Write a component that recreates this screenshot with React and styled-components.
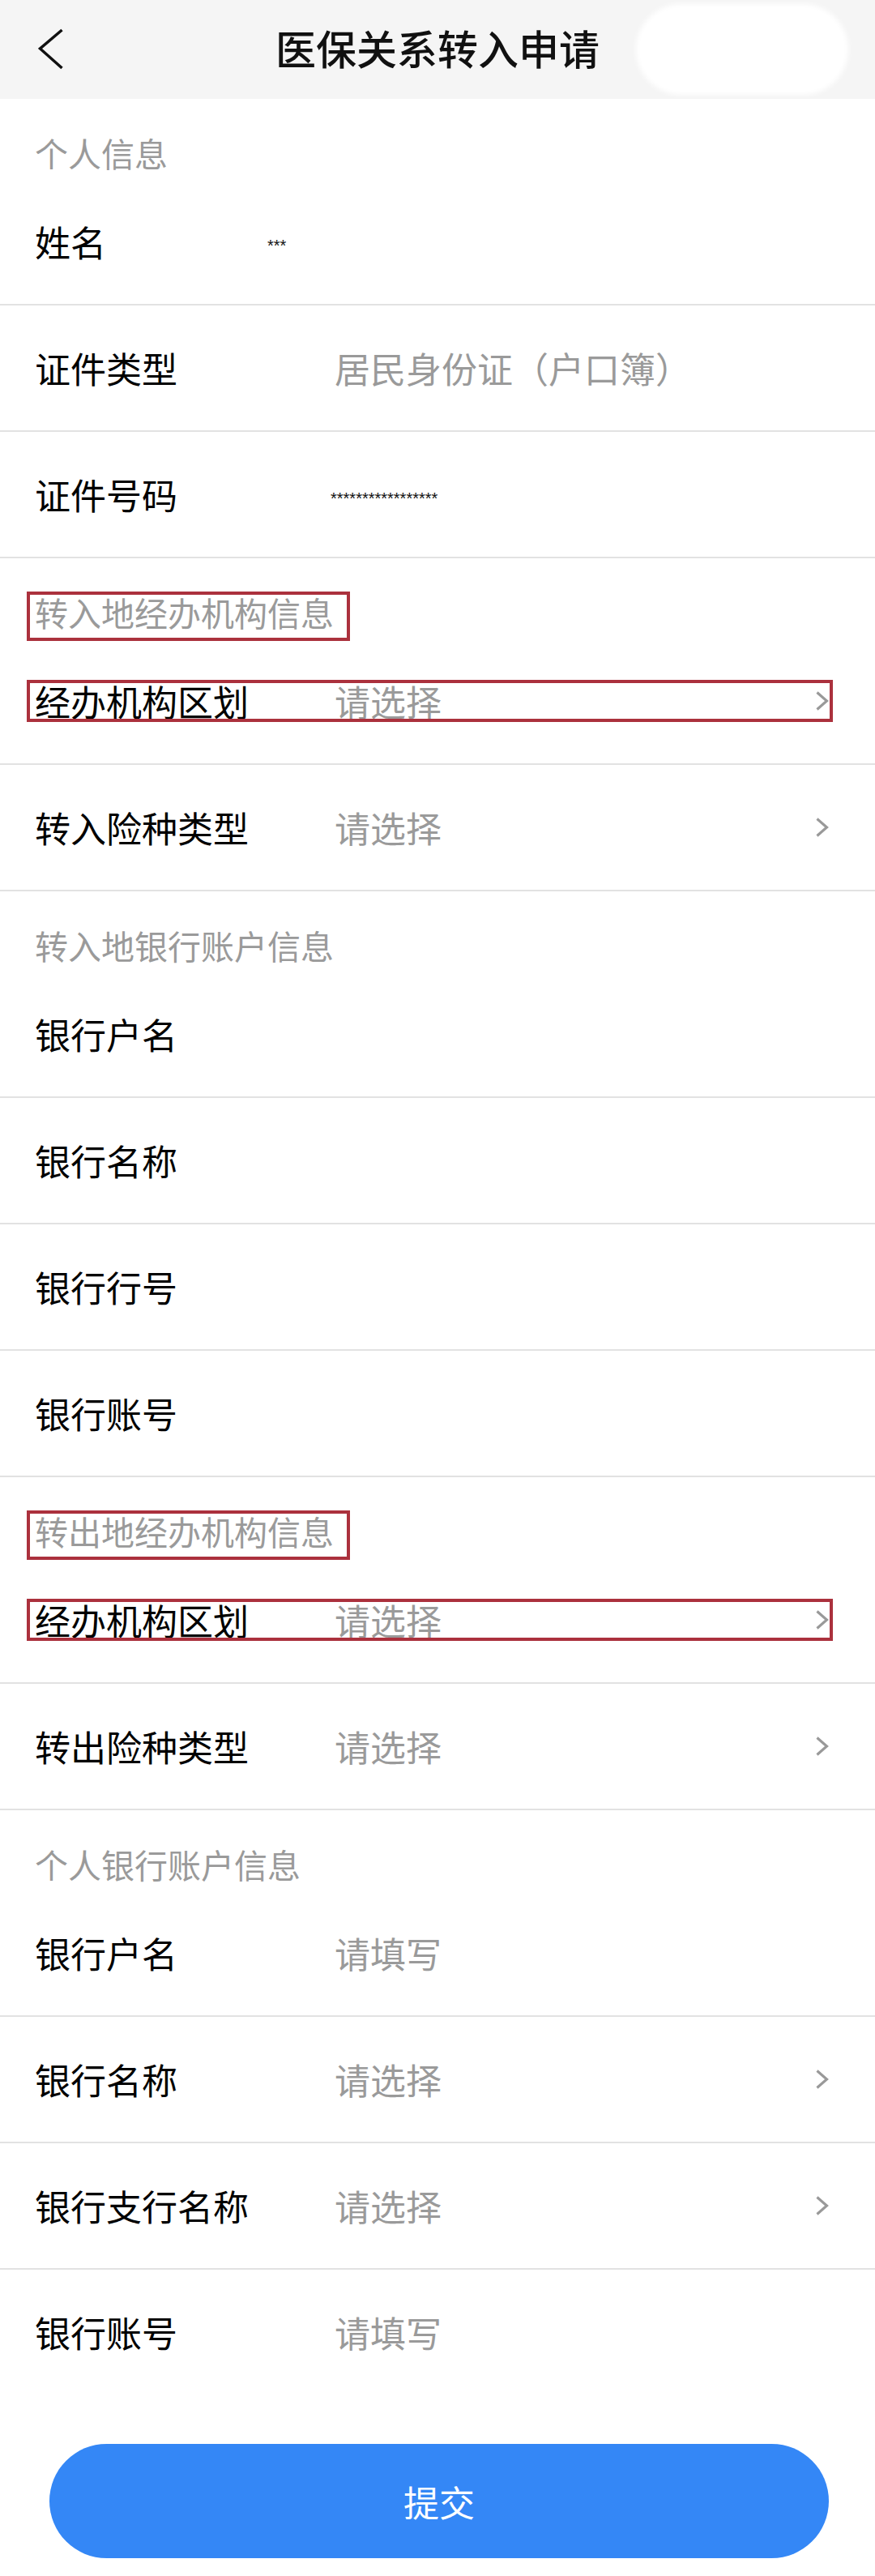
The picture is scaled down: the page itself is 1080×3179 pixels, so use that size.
import React from 'react';
import styled, { createGlobalStyle, css } from 'styled-components';

const GlobalStyle = createGlobalStyle`
    html, body {
        margin: 0;
        padding: 0;
        background: #ffffff;
    }
    body {
        font-family: "Noto Sans CJK SC", "Noto Sans", sans-serif;
        color: #111;
    }
`;

const Page = styled.div`
    width: 1080px;
    background: #fff;
    padding-bottom: 22px;
`;

const Header = styled.header`
    height: 122px;
    background: #f5f5f5;
    display: grid;
    grid-template-columns: 1fr auto 1fr;
    align-items: center;
`;

const BackButton = styled.div`
    justify-self: start;
    padding-left: 47px;
    display: flex;
    align-items: center;
`;

const Title = styled.h1`
    margin: 0 0 6px;
    font-size: 50px;
    line-height: 1;
    font-weight: 500;
    color: #111;
    letter-spacing: 0;
`;

/* 右上角被涂白的区域 */
const Blob = styled.div`
    justify-self: end;
    margin-right: 33px;
    width: 262px;
    height: 112px;
    border-radius: 56px;
    background: #fff;
    filter: blur(3px);
`;

const SectionHead = styled.div`
    height: 99px;
    box-sizing: border-box;
    padding: 46px 43px 12px;
`;

const markBox = css`
    position: relative;
    &::after {
        content: '';
        position: absolute;
        border: 4px solid #ab313d;
        pointer-events: none;
    }
`;

const SectionTitle = styled.span`
    display: inline-block;
    font-size: 41px;
    line-height: 41px;
    color: #9a9a9a;
    ${p => p.$marked && css`
        ${markBox}
        &::after { top: -5px; bottom: -15px; left: -10px; right: -20px; }
    `}
`;

const Row = styled.div`
    height: 154px;
    display: flex;
    align-items: center;
    padding: 0 57px 0 43px;
    border-bottom: ${p => (p.$last ? 'none' : '2px solid #e2e2e2')};
`;

const RowInner = styled.div`
    flex: 1;
    height: 44px;
    display: flex;
    align-items: center;
    ${p => p.$marked && css`
        ${markBox}
        &::after { top: -4px; bottom: -4px; left: -10px; right: -5px; }
    `}
`;

const Label = styled.span`
    width: 370px;
    flex-shrink: 0;
    font-size: 44px;
    line-height: 44px;
    color: #000;
`;

const Value = styled.span`
    flex: 1;
    font-size: 44px;
    line-height: 44px;
    color: #9a9a9a;
    white-space: nowrap;
`;

const Masked = styled.span`
    flex: 1;
    font-family: "Liberation Sans", Arial, sans-serif;
    font-size: 20px;
    line-height: 20px;
    margin-top: 10px;
    margin-left: ${p => p.$offset || 0}px;
    color: #111;
`;

const Arrow = styled.svg`
    flex-shrink: 0;
    width: 17px;
    height: 24px;
`;

const SubmitButton = styled.button`
    display: block;
    width: 962px;
    height: 141px;
    margin: 61px 0 0 61px;
    border: none;
    border-radius: 71px;
    background: #3487f6;
    color: #fff;
    font-family: "Noto Sans CJK SC", sans-serif;
    font-size: 44px;
    line-height: 1;
`;

const sections = [
    {
        title: '个人信息',
        rows: [
            { label: '姓名', masked: '***', offset: -83 },
            { label: '证件类型', value: '居民身份证（户口簿）' },
            { label: '证件号码', masked: '*****************', offset: -5 },
        ],
    },
    {
        title: '转入地经办机构信息',
        marked: true,
        rows: [
            { label: '经办机构区划', value: '请选择', arrow: true, marked: true },
            { label: '转入险种类型', value: '请选择', arrow: true },
        ],
    },
    {
        title: '转入地银行账户信息',
        rows: [
            { label: '银行户名' },
            { label: '银行名称' },
            { label: '银行行号' },
            { label: '银行账号' },
        ],
    },
    {
        title: '转出地经办机构信息',
        marked: true,
        rows: [
            { label: '经办机构区划', value: '请选择', arrow: true, marked: true },
            { label: '转出险种类型', value: '请选择', arrow: true },
        ],
    },
    {
        title: '个人银行账户信息',
        rows: [
            { label: '银行户名', value: '请填写' },
            { label: '银行名称', value: '请选择', arrow: true },
            { label: '银行支行名称', value: '请选择', arrow: true },
            { label: '银行账号', value: '请填写', last: true },
        ],
    },
];

const ChevronRight = () => (
    <Arrow viewBox="0 0 17 24">
        <polyline points="2.5,1.5 14.5,12 2.5,22.5" fill="none" stroke="#999" strokeWidth="3.2" />
    </Arrow>
);

const FormRow = ({ row }) => (
    <Row $last={row.last}>
        <RowInner $marked={row.marked}>
            <Label>{row.label}</Label>
            {row.masked ? (
                <Masked $offset={row.offset}>{row.masked}</Masked>
            ) : (
                <Value>{row.value}</Value>
            )}
            {row.arrow && <ChevronRight />}
        </RowInner>
    </Row>
);

export default function App() {
    return (
        <Page>
            <GlobalStyle />
            <Header>
                <BackButton>
                    <svg width="32" height="52" viewBox="0 0 32 52">
                        <polyline points="29.5,2 2.5,25 29.5,49" fill="none" stroke="#111" strokeWidth="3.5" />
                    </svg>
                </BackButton>
                <Title>医保关系转入申请</Title>
                <Blob />
            </Header>

            {sections.map(section => (
                <section key={section.title}>
                    <SectionHead>
                        <SectionTitle $marked={section.marked}>{section.title}</SectionTitle>
                    </SectionHead>
                    {section.rows.map((row, i) => (
                        <FormRow key={i} row={row} />
                    ))}
                </section>
            ))}

            <SubmitButton>提交</SubmitButton>
        </Page>
    );
}
